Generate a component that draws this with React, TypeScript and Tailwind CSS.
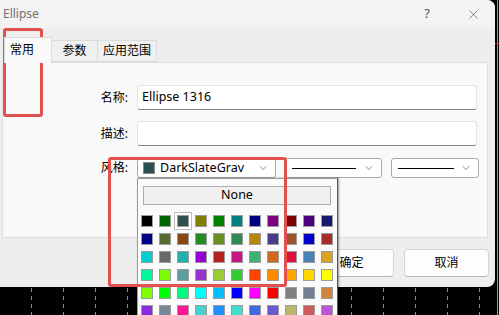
import { ChevronDown, X } from "lucide-react";

const font = "font-['Segoe_UI','Noto_Sans','Noto_Sans_CJK_SC',sans-serif]";

const palette = [
  ["#000000", "#006400", "#2f4f4f", "#808000", "#008000", "#008080", "#000080", "#800080", "#800000", "#4b0082", "#191970"],
  ["#00008b", "#556b2f", "#8b4513", "#228b22", "#6b8e23", "#2e8b57", "#b8860b", "#483d8b", "#a0522d", "#0000cd", "#a52a2a"],
  ["#00ced1", "#696969", "#20b2aa", "#9400d3", "#b22222", "#c71585", "#3cb371", "#d2691e", "#dc143c", "#4682b4", "#daa520"],
  ["#00fa9a", "#7cfc00", "#5f9ea0", "#9932cc", "#9acd32", "#32cd32", "#ff4500", "#ff8c00", "#ffa500", "#ffd700", "#ffff00"],
  ["#7fff00", "#00ff00", "#00ff7f", "#00ffff", "#00bfff", "#0000ff", "#ff00ff", "#ff0000", "#808080", "#708090", "#cd853f"],
  ["#8a2be2", "#778899", "#ff1493", "#48d1cc", "#1e90ff", "#40e0d0", "#4169e1", "#6a5acd", "#bdb76b", "#cd5c5c", "#ba55d3"],
];

function ChartBackdrop() {
  const xs = Array.from({ length: 15 }, (_, i) => 31 + i * 32);
  return (
    <svg className="absolute inset-0" width="499" height="315">
      <rect width="499" height="315" fill="#000" />
      {xs.map((x) => (
        <line key={x} x1={x + 0.5} y1="0" x2={x + 0.5} y2="315" stroke="#8c8c8c" strokeDasharray="4 4" />
      ))}
      <line x1="497.5" y1="0" x2="497.5" y2="315" stroke="#9a9a9a" />
      <line x1="495" y1="43.5" x2="499" y2="43.5" stroke="#d02020" />
    </svg>
  );
}

function LineCombo({ width, lineWidth }: { width: string; lineWidth: string }) {
  return (
    <div className={`${width} h-[20px] bg-white border border-[#a8a8a8] rounded-[3px] flex items-center pl-[6px] pr-[6px]`}>
      <div className={`${lineWidth} h-[1px] bg-black`} />
      <div className="flex-1" />
      <ChevronDown size={12} strokeWidth={1.3} className="text-[#555]" />
    </div>
  );
}

function ColorPopup() {
  return (
    <div className="absolute left-[137px] top-[178px] w-[201px] h-[150px] bg-[#fafafa] border border-[#9a9a9a] border-r-[#555] shadow-[1px_0_2px_rgba(0,0,0,0.4)] pt-[7px]">
      <div className="ml-[5px] w-[188px] h-[19px] bg-[#f0f0f0] border border-[#adadad] flex items-center justify-center text-[12.5px] text-black">
        None
      </div>
      <div className="mt-[7px] grid grid-cols-[repeat(11,18px)]">
        {palette.flat().map((c, i) => (
          <div
            key={i}
            className={`w-[18px] h-[18px] flex items-center justify-center ${i === 2 ? "bg-white border border-[#bdbdbd]" : ""}`}
          >
            <div className="w-[12px] h-[12px] border border-[#9c9c9c]" style={{ backgroundColor: c }} />
          </div>
        ))}
      </div>
    </div>
  );
}

export default function App() {
  return (
    <div className={`relative w-[499px] h-[315px] overflow-hidden ${font}`}>
      <ChartBackdrop />

      <div className="relative w-[495px] h-[287px] bg-[#eeeeee] rounded-r-[8px] flex flex-col">
        {/* title bar */}
        <div className="h-[28px] bg-[#f3f3f3] rounded-tr-[8px] flex items-center pl-[3px]">
          <span className="text-[12px] text-[#707070]">Ellipse</span>
          <div className="flex-1" />
          <span className="text-[13px] text-[#555] mr-[36px]">?</span>
          <X size={15} strokeWidth={1} className="text-[#444] mr-[14px]" />
        </div>

        {/* tabs */}
        <div className="flex items-end pl-[4px] mt-[9px] h-[25px] text-[12px] text-black">
          <div className="w-[48px] h-[25px] bg-[#f9f9f9] border border-b-0 border-[#dcdcdc] pl-[5px] pt-[3px] z-10 -mb-[1px] h-[26px]">
            常用
          </div>
          <div className="w-[46px] h-[22px] bg-[#f0f0f0] border border-l-0 border-[#dcdcdc] flex items-center justify-center">
            参数
          </div>
          <div className="w-[59px] h-[22px] bg-[#f0f0f0] border border-l-0 border-[#dcdcdc] flex items-center justify-center">
            应用范围
          </div>
        </div>

        {/* panel */}
        <div className="ml-[2px] w-[486px] h-[176px] bg-[#f9f9f9] border border-[#dedede] pt-[22px] flex flex-col gap-[11px] text-[12px] text-black">
          <div className="flex items-center gap-[9px]">
            <div className="w-[125px] text-right">名称:</div>
            <div className="w-[340px] h-[25px] bg-white border border-[#e3e3e3] border-b-[#868686] rounded-[3px] flex items-center pl-[4px] text-[12.5px]">
              Ellipse 1316
            </div>
          </div>
          <div className="flex items-center gap-[9px]">
            <div className="w-[125px] text-right">描述:</div>
            <div className="w-[340px] h-[25px] bg-white border border-[#e3e3e3] border-b-[#868686] rounded-[3px]" />
          </div>
          <div className="flex items-center gap-[9px] mt-[1px]">
            <div className="w-[125px] text-right">风格:</div>
            <div className="w-[139px] h-[20px] bg-white border border-[#a8a8a8] rounded-[3px] flex items-center pl-[5px] pr-[6px]">
              <div className="w-[12px] h-[12px] bg-[#2f4f4f] border border-[#888]" />
              <span className="ml-[5px] text-[12.5px] overflow-hidden whitespace-nowrap w-[90px]">DarkSlateGrav</span>
              <div className="flex-1" />
              <ChevronDown size={12} strokeWidth={1.3} className="text-[#555]" />
            </div>
            <LineCombo width="w-[97px]" lineWidth="w-[64px]" />
            <LineCombo width="w-[88px]" lineWidth="w-[56px]" />
          </div>
        </div>

        {/* buttons */}
        <div className="flex justify-end gap-[10px] pr-[6px] mt-[11px] text-[12px] text-black">
          <button className="w-[85px] h-[28px] bg-[#fdfdfd] border border-[#d4d4d4] border-b-[#b8b8b8] rounded-[4px]">确定</button>
          <button className="w-[85px] h-[28px] bg-[#fdfdfd] border border-[#d4d4d4] border-b-[#b8b8b8] rounded-[4px]">取消</button>
        </div>
      </div>

      <ColorPopup />

      {/* annotation frames */}
      <div className="absolute left-[3px] top-[28px] w-[40px] h-[89px] border-[3px] border-[#e25050] rounded-[3px]" />
      <div className="absolute left-[108px] top-[157px] w-[179px] h-[130px] border-[3px] border-[#e25050] rounded-[3px]" />
    </div>
  );
}
